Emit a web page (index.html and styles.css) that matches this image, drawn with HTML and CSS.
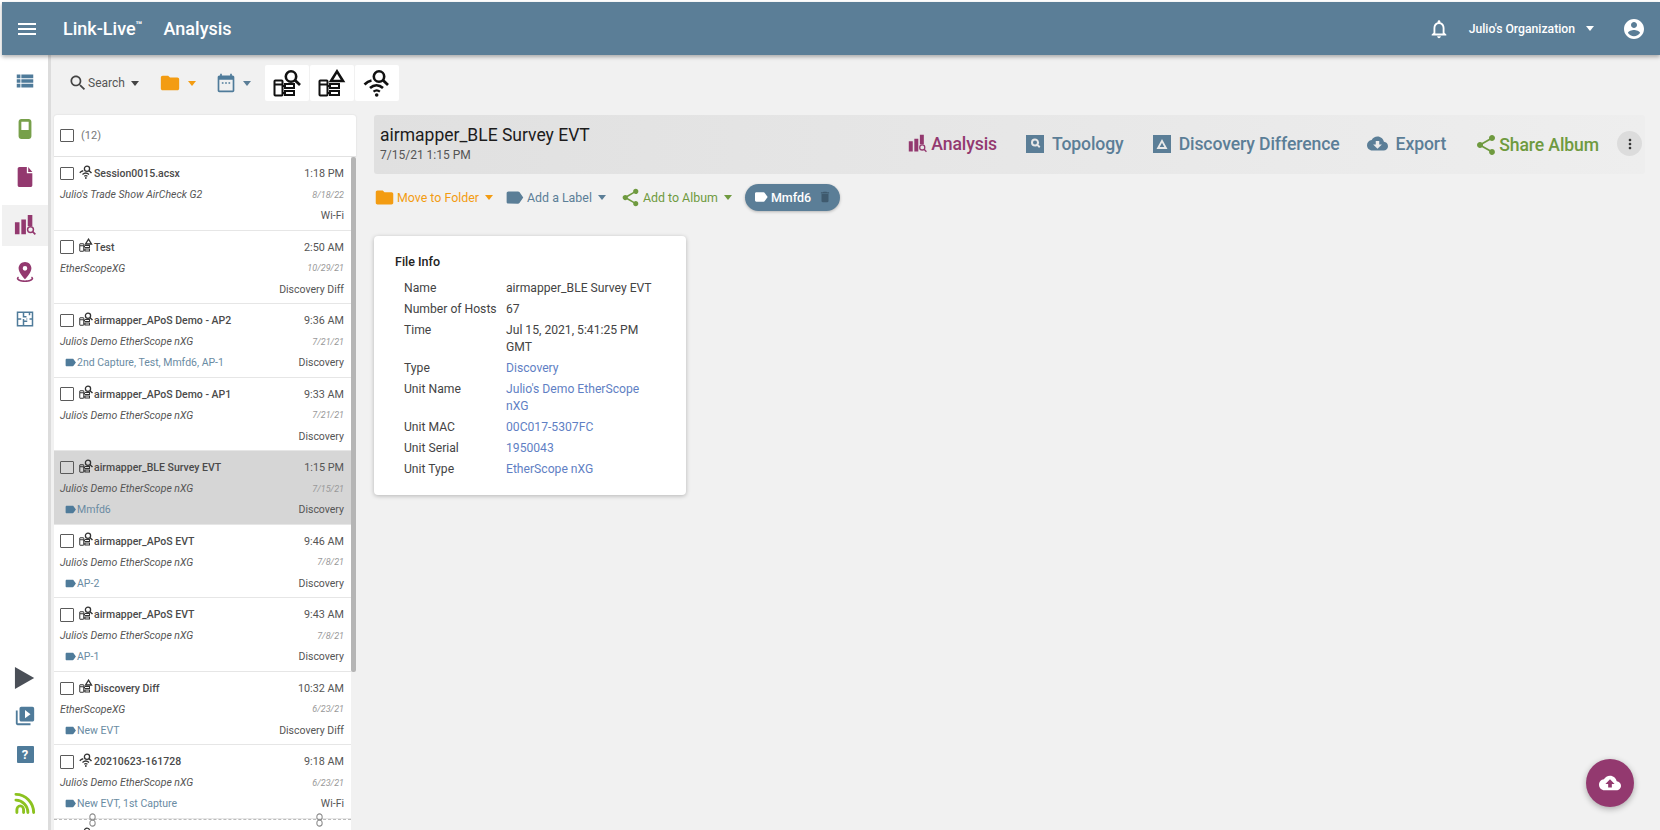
FILE: index.html
```html
<!DOCTYPE html>
<html lang="en">
<head>
<meta charset="utf-8">
<title>Link-Live Analysis</title>
<link rel="stylesheet" href="styles.css">
</head>
<body>
<svg class="defs" width="0" height="0" aria-hidden="true">
  <defs>
    <symbol id="i-search" viewBox="0 0 24 24"><path d="M15.5 14h-.79l-.28-.27C15.41 12.59 16 11.11 16 9.5 16 5.91 13.09 3 9.5 3S3 5.91 3 9.5 5.91 16 9.5 16c1.61 0 3.09-.59 4.23-1.57l.27.28v.79l5 4.99L20.49 19l-4.99-5zm-6 0C7.01 14 5 11.99 5 9.5S7.01 5 9.5 5 14 7.01 14 9.5 11.99 14 9.5 14z"/></symbol>
    <symbol id="i-folder" viewBox="0 0 24 24"><path d="M10 4H4c-1.1 0-1.99.9-1.99 2L2 18c0 1.1.9 2 2 2h16c1.1 0 2-.9 2-2V8c0-1.1-.9-2-2-2h-8l-2-2z"/></symbol>
    <symbol id="i-label" viewBox="0 0 24 24"><path d="M17.63 5.84C17.27 5.33 16.67 5 16 5L5 5.01C3.9 5.01 3 5.9 3 7v10c0 1.1.9 1.99 2 1.99L16 19c.67 0 1.27-.33 1.63-.84L22 12l-4.37-6.16z"/></symbol>
    <symbol id="i-share" viewBox="0 0 24 24"><path d="M18 16.08c-.76 0-1.44.3-1.96.77L8.91 12.7c.05-.23.09-.46.09-.7s-.04-.47-.09-.7l7.05-4.11c.54.5 1.25.81 2.04.81 1.66 0 3-1.34 3-3s-1.34-3-3-3-3 1.34-3 3c0 .24.04.47.09.7L8.04 9.81C7.5 9.31 6.79 9 6 9c-1.66 0-3 1.34-3 3s1.34 3 3 3c.79 0 1.5-.31 2.04-.81l7.12 4.16c-.05.21-.08.43-.08.65 0 1.61 1.31 2.92 2.92 2.92 1.61 0 2.92-1.31 2.92-2.92s-1.31-2.92-2.92-2.92z"/></symbol>
    <symbol id="i-chart" viewBox="0 0 24 24"><path d="M1 9h5v13H1zM8 6h5v16H8zM15 1h5v12h-5z"/><circle cx="18" cy="17" r="3.2" fill="none" stroke="currentColor" stroke-width="1.6"/><path d="M20.3 19.3l3 3" stroke="currentColor" stroke-width="1.8"/></symbol>
    <symbol id="g-search" viewBox="0 0 28 28"><g fill="none" stroke="currentColor" stroke-width="2"><rect x="1.5" y="11.5" width="8" height="15" rx=".8"/><path d="M2 15.5h7"/><rect x="12" y="15" width="9" height="4"/><rect x="12" y="22" width="9" height="4"/><path d="M9.5 17h2.5M9.5 24h2.5"/></g><circle cx="18" cy="7.5" r="5.2" fill="none" stroke="currentColor" stroke-width="2.6"/><path d="M22 11.3l5 4.7" stroke="currentColor" stroke-width="2.8" fill="none"/></symbol>
    <symbol id="g-delta" viewBox="0 0 28 28"><g fill="none" stroke="currentColor" stroke-width="2"><rect x="1.5" y="11.5" width="8" height="15" rx=".8"/><path d="M2 15.5h7"/><rect x="12" y="15" width="9" height="4"/><rect x="12" y="22" width="9" height="4"/><path d="M9.5 17h2.5M9.5 24h2.5"/></g><path d="M19 2.4l6 9.6H13z" fill="none" stroke="currentColor" stroke-width="2.6"/></symbol>
    <symbol id="g-wifi" viewBox="0 0 28 28"><circle cx="16" cy="7.5" r="5.2" fill="none" stroke="currentColor" stroke-width="2.6"/><path d="M20 11.3l5 4.7" stroke="currentColor" stroke-width="2.8" fill="none"/><path d="M1.5 15.5C4 13 6 12 8.5 11.5" stroke="currentColor" stroke-width="2.6" fill="none"/><path d="M7 19c4-3.6 9-3.6 13 0" stroke="currentColor" stroke-width="2.6" fill="none"/><path d="M10.500 22.600c2-1.600 4.400-1.600 6.400 0" stroke="currentColor" stroke-width="2.200" fill="none"/><circle cx="13.700" cy="26" r="1.800" fill="currentColor"/></symbol>
    <symbol id="i-link" viewBox="0 0 8 16"><rect x="1" y="1" width="6" height="7" rx="3" fill="none" stroke="#8a8a8a" stroke-width="1.200"/><rect x="1" y="8" width="6" height="7" rx="3" fill="none" stroke="#8a8a8a" stroke-width="1.200"/></symbol>
  </defs>
</svg>

<div class="app">
  <header class="topbar">
    <svg class="ico menu" viewBox="0 0 24 24"><path d="M3 18h18v-2H3v2zm0-5h18v-2H3v2zm0-7v2h18V6H3z"/></svg>
    <span class="brand">Link-Live<sup>™</sup></span>
    <span class="page-title">Analysis</span>
    <span class="spring"></span>
    <svg class="ico bell" viewBox="0 0 24 24"><path d="M12 22c1.100 0 2-.9 2-2h-4c0 1.100.9 2 2 2zm6-6v-5c0-3.070-1.630-5.640-4.500-6.320V4c0-.83-.67-1.500-1.500-1.500s-1.500.67-1.500 1.500v.68C7.640 5.360 6 7.920 6 11v5l-2 2v1h16v-1l-2-2zm-2 1H8v-6c0-2.480 1.510-4.500 4-4.500s4 2.020 4 4.500v6z"/></svg>
    <span class="org">Julio's Organization</span>
    <span class="caret caret-white org-caret"></span>
    <svg class="ico account" viewBox="0 0 24 24"><path d="M12 2C6.480 2 2 6.480 2 12s4.480 10 10 10 10-4.480 10-10S17.520 2 12 2zm0 3c1.660 0 3 1.340 3 3s-1.340 3-3 3-3-1.340-3-3 1.340-3 3-3zm0 14.200c-2.500 0-4.710-1.280-6-3.220.03-1.990 4-3.080 6-3.080 1.990 0 5.970 1.090 6 3.080-1.290 1.940-3.500 3.220-6 3.220z"/></svg>
  </header>

  <div class="body">
    <nav class="sidebar">
      <a class="nav-item"><svg class="nav-ico steel" viewBox="0 0 24 24"><path d="M3 5h4v4H3zM8 5h13v4H8zM3 10h4v4H3zM8 10h13v4H8zM3 15h4v4H3zM8 15h13v4H8z"/></svg></a>
      <a class="nav-item"><svg class="nav-ico green" viewBox="0 0 24 24"><path d="M8 1h8c1.700 0 3 1.300 3 3v16c0 1.700-1.300 3-3 3H8c-1.700 0-3-1.300-3-3V4c0-1.700 1.300-3 3-3zm0 3v9h8V4z" fill-rule="evenodd"/></svg></a>
      <a class="nav-item"><svg class="nav-ico plum" viewBox="0 0 24 24"><path d="M6 1C4.900 1 4 1.900 4 3v18c0 1.100.9 2 2 2h12c1.100 0 2-.9 2-2V8h-6V1zM15.500 1v5.500H20z"/></svg></a>
      <a class="nav-item active"><svg class="nav-ico plum" viewBox="0 0 24 24"><use href="#i-chart"/></svg></a>
      <a class="nav-item"><svg class="nav-ico nav-place plum" viewBox="0 0 24 24"><path d="M12 1C8.100 1 5 4.100 5 8c0 5 7 12 7 12s7-7 7-12c0-3.900-3.100-7-7-7zm0 9.500A2.500 2.500 0 1 1 12 5.500a2.500 2.500 0 0 1 0 5z" fill-rule="evenodd"/><path d="M4.500 17c-1 .7-1.500 1.400-1.500 2.200C3 21.300 7 23 12 23s9-1.700 9-3.800c0-.8-.5-1.500-1.500-2.200l-1 1.500c.5.300.7.500.7.700 0 .7-2.900 2-7.200 2s-7.200-1.300-7.200-2c0-.2.2-.4.700-.7z"/></svg></a>
      <a class="nav-item"><svg class="nav-plan" viewBox="0 0 24 24"><path d="M2 3h20v18H2zM2 12h5M10 3v6h4M10 12v9M10 15h5M18 3v4M18 12h4M14 12h1" fill="none" stroke="currentColor" stroke-width="2"/></svg></a>
      <span class="spring"></span>
      <a class="nav-low"><svg class="nav-play" viewBox="0 0 24 24"><path d="M1 0l21 12L1 24z"/></svg></a>
      <a class="nav-low"><svg class="nav-ico steel" viewBox="0 0 24 24"><path d="M4 6H2v14c0 1.100.9 2 2 2h14v-2H4V6zm16-4H8c-1.100 0-2 .9-2 2v12c0 1.100.9 2 2 2h12c1.100 0 2-.9 2-2V4c0-1.100-.9-2-2-2zm-8 12.500v-9l6 4.500-6 4.500z"/></svg></a>
      <a class="nav-low"><span class="help">?</span></a>
      <a class="nav-rss"><svg class="nav-rssico" viewBox="0 0 24 24"><path d="M2 3.500c10 0 18.500 8.500 18.500 19M2 9.500c6.500 0 12.500 6 12.500 13M3 22.500v-3c0-2 1.500-4 3.500-4s3.500 2 3.500 4v3" fill="none" stroke="currentColor" stroke-width="3" stroke-linecap="round"/></svg></a>
    </nav>

    <main class="main">
      <div class="toolbar">
        <span class="tool"><svg class="ico16 dark" viewBox="0 0 24 24"><use href="#i-search"/></svg><span class="tool-text">Search</span><span class="caret caret-dark"></span></span>
        <span class="tool tool-folder"><svg class="ico20 orange" viewBox="0 0 24 24"><use href="#i-folder"/></svg><span class="caret caret-orange"></span></span>
        <span class="tool tool-cal"><svg class="ico18 steel" viewBox="0 0 24 24"><path d="M20 3h-1V1h-2v2H7V1H5v2H4c-1.100 0-2 .9-2 2v16c0 1.100.9 2 2 2h16c1.100 0 2-.9 2-2V5c0-1.100-.9-2-2-2zm0 18H4V8h16v13zM7 11h2v2H7zM11 11h2v2h-2zM15 11h2v2h-2z"/></svg><span class="caret caret-steel"></span></span>
        <span class="glyph-group">
          <span class="glyph-btn"><svg class="glyph"><use href="#g-search"/></svg></span>
          <span class="glyph-btn"><svg class="glyph"><use href="#g-delta"/></svg></span>
          <span class="glyph-btn"><svg class="glyph"><use href="#g-wifi"/></svg></span>
        </span>
      </div>

      <div class="workspace">
        <section class="list">
          <div class="list-head"><span class="check"></span><span class="count">(12)</span></div>
          <div class="list-body">
            <div class="rows">
              <article class="row">
                <div class="line"><span class="check"></span><svg class="mini"><use href="#g-wifi"/></svg><span class="name">Session0015.acsx</span><span class="time">1:18 PM</span></div>
                <div class="line"><span class="unit">Julio's Trade Show AirCheck G2</span><span class="date">8/18/22</span></div>
                <div class="line"><span class="tags"></span><span class="kind">Wi-Fi</span></div>
              </article>
              <article class="row">
                <div class="line"><span class="check"></span><svg class="mini"><use href="#g-delta"/></svg><span class="name">Test</span><span class="time">2:50 AM</span></div>
                <div class="line"><span class="unit">EtherScopeXG</span><span class="date">10/29/21</span></div>
                <div class="line"><span class="tags"></span><span class="kind">Discovery Diff</span></div>
              </article>
              <article class="row">
                <div class="line"><span class="check"></span><svg class="mini"><use href="#g-search"/></svg><span class="name">airmapper_APoS Demo - AP2</span><span class="time">9:36 AM</span></div>
                <div class="line"><span class="unit">Julio's Demo EtherScope nXG</span><span class="date">7/21/21</span></div>
                <div class="line"><span class="tags"><svg class="tag-ico" viewBox="0 0 24 24"><use href="#i-label"/></svg>2nd Capture, Test, Mmfd6, AP-1</span><span class="kind">Discovery</span></div>
              </article>
              <article class="row">
                <div class="line"><span class="check"></span><svg class="mini"><use href="#g-search"/></svg><span class="name">airmapper_APoS Demo - AP1</span><span class="time">9:33 AM</span></div>
                <div class="line"><span class="unit">Julio's Demo EtherScope nXG</span><span class="date">7/21/21</span></div>
                <div class="line"><span class="tags"></span><span class="kind">Discovery</span></div>
              </article>
              <article class="row selected">
                <div class="line"><span class="check"></span><svg class="mini"><use href="#g-search"/></svg><span class="name">airmapper_BLE Survey EVT</span><span class="time">1:15 PM</span></div>
                <div class="line"><span class="unit">Julio's Demo EtherScope nXG</span><span class="date">7/15/21</span></div>
                <div class="line"><span class="tags"><svg class="tag-ico" viewBox="0 0 24 24"><use href="#i-label"/></svg>Mmfd6</span><span class="kind">Discovery</span></div>
              </article>
              <article class="row">
                <div class="line"><span class="check"></span><svg class="mini"><use href="#g-search"/></svg><span class="name">airmapper_APoS EVT</span><span class="time">9:46 AM</span></div>
                <div class="line"><span class="unit">Julio's Demo EtherScope nXG</span><span class="date">7/8/21</span></div>
                <div class="line"><span class="tags"><svg class="tag-ico" viewBox="0 0 24 24"><use href="#i-label"/></svg>AP-2</span><span class="kind">Discovery</span></div>
              </article>
              <article class="row">
                <div class="line"><span class="check"></span><svg class="mini"><use href="#g-search"/></svg><span class="name">airmapper_APoS EVT</span><span class="time">9:43 AM</span></div>
                <div class="line"><span class="unit">Julio's Demo EtherScope nXG</span><span class="date">7/8/21</span></div>
                <div class="line"><span class="tags"><svg class="tag-ico" viewBox="0 0 24 24"><use href="#i-label"/></svg>AP-1</span><span class="kind">Discovery</span></div>
              </article>
              <article class="row">
                <div class="line"><span class="check"></span><svg class="mini"><use href="#g-delta"/></svg><span class="name">Discovery Diff</span><span class="time">10:32 AM</span></div>
                <div class="line"><span class="unit">EtherScopeXG</span><span class="date">6/23/21</span></div>
                <div class="line"><span class="tags"><svg class="tag-ico" viewBox="0 0 24 24"><use href="#i-label"/></svg>New EVT</span><span class="kind">Discovery Diff</span></div>
              </article>
              <article class="row">
                <div class="line"><span class="check"></span><svg class="mini"><use href="#g-wifi"/></svg><span class="name">20210623-161728</span><span class="time">9:18 AM</span></div>
                <div class="line"><span class="unit">Julio's Demo EtherScope nXG</span><span class="date">6/23/21</span></div>
                <div class="line"><span class="tags"><svg class="tag-ico" viewBox="0 0 24 24"><use href="#i-label"/></svg>New EVT, 1st Capture</span><span class="kind">Wi-Fi</span></div>
              </article>
              <article class="row row-break">
                <svg class="link link-a"><use href="#i-link"/></svg>
                <svg class="link link-b"><use href="#i-link"/></svg>
                <div class="line"><span class="check check-hidden"></span><svg class="mini"><use href="#g-wifi"/></svg><span class="name"></span></div>
              </article>
            </div>
            <div class="scroll"><span class="thumb"></span></div>
          </div>
        </section>

        <section class="detail">
          <div class="detail-head">
            <div class="detail-title">
              <h1>airmapper_BLE Survey EVT</h1>
              <p>7/15/21 1:15 PM</p>
            </div>
            <span class="spring"></span>
            <a class="act act-plum"><svg class="act-ico act-chart" viewBox="0 0 24 24"><use href="#i-chart"/></svg>Analysis</a>
            <a class="act act-steel"><svg class="act-ico" viewBox="0 0 24 24"><path d="M3 3h18v18H3zm9 3.500a4 4 0 1 0 0 8 4 4 0 0 0 2.100-.6l2 2 1.300-1.300-2-2a4 4 0 0 0-3.400-6.100zm0 2a2 2 0 1 1 0 4 2 2 0 0 1 0-4z" fill-rule="evenodd"/></svg>Topology</a>
            <a class="act act-steel"><svg class="act-ico" viewBox="0 0 24 24"><path d="M3 3h18v18H3zm9 4L6.500 17h11zm0 3.800l2.300 4.200H9.700z" fill-rule="evenodd"/></svg>Discovery Difference</a>
            <a class="act act-steel act-export"><svg class="act-ico act-cloud" viewBox="0 0 24 24"><path d="M19.350 10.040C18.670 6.590 15.640 4 12 4 9.110 4 6.600 5.640 5.350 8.040 2.340 8.360 0 10.910 0 14c0 3.310 2.690 6 6 6h13c2.760 0 5-2.240 5-5 0-2.640-2.050-4.780-4.650-4.960zM17 13l-5 5-5-5h3V9h4v4h3z"/></svg>Export</a>
            <a class="act act-green"><svg class="act-ico act-share" viewBox="0 0 24 24"><use href="#i-share"/></svg>Share Album</a>
            <span class="more"><svg class="ico14" viewBox="0 0 24 24"><path d="M12 8c1.100 0 2-.9 2-2s-.9-2-2-2-2 .9-2 2 .9 2 2 2zm0 2c-1.100 0-2 .9-2 2s.9 2 2 2 2-.9 2-2-.9-2-2-2zm0 6c-1.100 0-2 .9-2 2s.9 2 2 2 2-.9 2-2-.9-2-2-2z"/></svg></span>
          </div>

          <div class="actions">
            <a class="pick pick-orange"><svg class="pick-ico" viewBox="0 0 24 24"><use href="#i-folder"/></svg>Move to Folder<span class="caret caret-orange"></span></a>
            <a class="pick pick-steel"><svg class="pick-ico" viewBox="0 0 24 24"><use href="#i-label"/></svg>Add a Label<span class="caret caret-steel"></span></a>
            <a class="pick pick-green"><svg class="pick-ico" viewBox="0 0 24 24"><use href="#i-share"/></svg>Add to Album<span class="caret caret-green"></span></a>
            <span class="chip"><svg class="chip-ico" viewBox="0 0 24 24"><use href="#i-label"/></svg>Mmfd6<svg class="chip-del" viewBox="0 0 24 24"><path d="M6 19c0 1.100.9 2 2 2h8c1.100 0 2-.9 2-2V7H6v12zM19 4h-3.500l-1-1h-5l-1 1H5v2h14V4z"/></svg></span>
          </div>

          <div class="card">
            <h2>File Info</h2>
            <dl class="info">
              <dt>Name</dt><dd>airmapper_BLE Survey EVT</dd>
              <dt>Number of Hosts</dt><dd>67</dd>
              <dt>Time</dt><dd>Jul 15, 2021, 5:41:25 PM GMT</dd>
              <dt>Type</dt><dd class="blue">Discovery</dd>
              <dt>Unit Name</dt><dd class="blue">Julio's Demo EtherScope nXG</dd>
              <dt>Unit MAC</dt><dd class="blue">00C017-5307FC</dd>
              <dt>Unit Serial</dt><dd class="blue">1950043</dd>
              <dt>Unit Type</dt><dd class="blue">EtherScope nXG</dd>
            </dl>
          </div>
        </section>
      </div>
    </main>
  </div>
</div>

<button class="fab" type="button" aria-label="Upload"><svg viewBox="0 0 24 24"><path d="M19.350 10.040C18.670 6.590 15.640 4 12 4 9.110 4 6.600 5.640 5.350 8.040 2.340 8.360 0 10.910 0 14c0 3.310 2.690 6 6 6h13c2.760 0 5-2.240 5-5 0-2.640-2.050-4.780-4.650-4.960zM14 13v4h-4v-4H7l5-5 5 5h-3z"/></svg></button>
</body>
</html>
```
FILE: styles.css
```css
* { box-sizing: border-box; }
html, body { margin: 0; height: 100%; overflow: hidden; }
body {
  background: #fff;
  font-family: Roboto, "Liberation Sans", sans-serif;
  color: #555;
  font-size: 11px;
}
.defs { position: absolute; }
.spring { flex: 1; }
.app { display: flex; flex-direction: column; height: 100vh; padding: 2px 0 0 2px; }

.topbar {
  flex: 0 0 53px;
  display: flex;
  align-items: center;
  background: #5b7e97;
  color: #fff;
  padding: 0 14px 0 13px;
  box-shadow: 0 2px 4px rgba(0,0,0,.3);
  position: relative;
  z-index: 2;
}
.ico { fill: currentColor; }
.menu { width: 24px; height: 24px; }
.brand { font-size: 18px; font-weight: 500; margin-left: 24px; }
.brand sup { font-size: 11px; font-weight: 700; line-height: 0; vertical-align: 6px; }
.page-title { font-size: 18px; font-weight: 500; margin-left: 21px; }
.bell { width: 22px; height: 22px; }
.org { font-size: 12.2px; font-weight: 500; margin-left: 19px; }
.org-caret { margin-left: 11px; }
.account { width: 24px; height: 24px; margin-left: 28px; }

.caret { display: inline-block; width: 0; height: 0; border: 4.5px solid transparent; border-bottom: 0; border-top-width: 5px; }
.caret-white { border-top-color: #fff; }
.caret-dark { border-top-color: #444; }
.caret-orange { border-top-color: #f39c12; }
.caret-steel { border-top-color: #5b7e97; }
.caret-green { border-top-color: #6f9a3f; }

.body { flex: 1; display: flex; min-height: 0; }
.sidebar {
  flex: 0 0 49px;
  display: flex;
  flex-direction: column;
  padding: 2px 0 9px;
  background: #fff;
  border-right: 3px solid #dcdcdc;
}
.nav-item { flex: 0 0 48px; display: flex; align-items: center; justify-content: center; }
.nav-item.active { background: linear-gradient(#f1f1f1, #f1f1f1) no-repeat center / 100% 41px; }
.nav-low { flex: 0 0 38.5px; display: flex; align-items: center; justify-content: center; }
.nav-rss { flex: 0 0 38px; margin-top: 9px; display: flex; align-items: center; justify-content: center; }
.nav-ico { width: 22px; height: 22px; fill: currentColor; }
.nav-place { margin-top: -2px; }
.nav-plan { width: 18px; height: 18px; color: #4f7b9a; margin-top: -4px; }
.nav-play { width: 22px; height: 22px; fill: #4a4f57; }
.nav-rssico { width: 23px; height: 23px; color: #8cc21f; }
.steel { color: #4f7b9a; fill: currentColor; }
.green { color: #77a04a; }
.plum { color: #93396f; }
.orange { color: #f39c12; fill: currentColor; }
.dark { color: #444; fill: currentColor; }
.help { width: 17px; height: 17px; background: #4f7b9a; color: #fff; font-size: 13px; font-weight: 700; display: flex; align-items: center; justify-content: center; border-radius: 1px; }

.main { flex: 1; min-width: 0; background: #f1f1f1; display: flex; flex-direction: column; padding-left: 3px; }
.toolbar { flex: 0 0 60px; display: flex; align-items: center; padding: 0 0 4px 14px; }
.tool { display: flex; align-items: center; }
.tool-text { font-size: 12px; margin: 0 6px 0 0; color: #555; }
.tool-folder { margin-left: 20.5px; gap: 7px; }
.tool-cal { margin-left: 20px; gap: 7px; }
.ico16 { width: 20px; height: 20px; }
.ico18 { width: 20px; height: 20px; }
.ico20 { width: 22px; height: 22px; }
.ico14 { width: 16px; height: 16px; fill: #333; }
.glyph-group { display: flex; gap: 1px; margin-left: 14px; }
.glyph-btn { width: 44px; height: 36px; background: #fff; display: flex; align-items: center; justify-content: center; border-radius: 2px; }
.glyph { width: 28px; height: 28px; color: #111; }

.workspace { flex: 1; display: flex; min-height: 0; }
.list { flex: 0 0 302px; display: flex; flex-direction: column; min-height: 0; }
.list-head { flex: 0 0 42px; background: #fff; display: flex; align-items: center; padding-left: 6px; border-bottom: 1px solid #e2e2e2; border-radius: 3px 3px 0 0; box-shadow: 0 0 2px rgba(0,0,0,.12); }
.count { font-size: 11px; color: #777; margin-left: 7.5px; }
.check { flex: none; display: inline-block; width: 13.5px; height: 13.5px; border: 1.5px solid #5a5a5a; border-radius: 1px; }
.check-hidden { visibility: hidden; }
.list-body { flex: 1; display: flex; min-height: 0; overflow: hidden; }
.rows { flex: 1; min-width: 0; }
.row { height: 73.55px; background: #fff; border-bottom: 1px solid #e6e6e6; padding: 6px 7px 0 6px; position: relative; }
.row.selected { background: #d6d6d6; }
.row-break { border-top: 1px dashed #bbb; }
.link { position: absolute; width: 7px; height: 16px; top: -8px; }
.link-a { left: 35px; }
.link-b { left: 262px; }
.line { height: 21px; display: flex; align-items: center; justify-content: space-between; }
.mini { flex: none; width: 14px; height: 14px; margin: -4px 1.5px 0 5px; color: #333; }
.name { flex: 1; font-size: 10.5px; font-weight: 500; color: #4a4a4a; white-space: nowrap; }
.time { font-size: 10.8px; color: #555; }
.unit { font-size: 10.5px; font-style: italic; color: #555; }
.date { font-size: 9px; font-style: italic; color: #999; }
.tags { display: flex; align-items: center; color: #6a8ba3; font-size: 10.5px; padding-left: 4px; }
.tag-ico { width: 13px; height: 13px; fill: #4f7b9a; }
.kind { font-size: 10.5px; color: #555; }
.scroll { flex: 0 0 5px; background: #f1f1f1; position: relative; }
.thumb { display: block; width: 5px; height: 515px; background: #b5b5b5; border-radius: 2px; }

.detail { flex: 1; min-width: 0; padding: 0 15px 0 18px; }
.detail-head {
  height: 59px;
  display: flex;
  align-items: center;
  background: linear-gradient(90deg, #e0e0e0, #eeeeee);
  border-radius: 3px;
  padding: 0 3px 2px 6px;
}
.detail-title h1 { margin: 0; font-size: 17.5px; font-weight: 400; color: #1c1c1c; }
.detail-title p { margin: 3px 0 0; font-size: 12px; color: #555; }
.act { display: flex; align-items: center; font-size: 17.6px; font-weight: 500; margin-left: 26px; letter-spacing: -.1px; }
.act-ico { width: 24px; height: 24px; fill: currentColor; margin-right: 5px; }
.act-chart { width: 19px; height: 19px; margin-right: 4px; }
.act-cloud { width: 21px; height: 21px; margin-right: 8px; }
.act-share { margin-right: 1px; }
.act-plum { color: #93396f; }
.act-steel { color: #5b7e97; }
.act-export { margin-left: 27px; }
.act-green { color: #6f9a3f; margin-top: 2px; margin-left: 28px; }
.more { width: 25px; height: 25px; border-radius: 50%; background: #dcdcdc; display: flex; align-items: center; justify-content: center; margin-left: 18px; }

.actions { display: flex; align-items: center; height: 46px; }
.pick { display: flex; align-items: center; font-size: 12.4px; margin-right: 11px; }
.pick .caret { margin-left: 6px; }
.pick-ico { width: 21px; height: 21px; fill: currentColor; margin-right: 2px; }
.pick-orange { color: #f39c12; }
.pick-steel { color: #5b7e97; margin-right: 14px; }
.pick-green { color: #6f9a3f; }
.chip { display: flex; align-items: center; height: 27px; padding: 0 8px 0 8px; background: #5b7e97; color: #fff; border-radius: 14px; font-size: 12.5px; font-weight: 500; box-shadow: 0 1px 3px rgba(0,0,0,.25); margin-left: 2px; }
.chip-ico { width: 16px; height: 16px; fill: #fff; margin-right: 2px; }
.chip-del { width: 14px; height: 14px; fill: #3f5a6e; margin-left: 7px; }

.card { width: 312px; height: 259px; margin-top: 16px; background: #fff; border-radius: 4px; box-shadow: 0 1px 4px rgba(0,0,0,.25); padding: 18px 20px 0 21px; }
.card h2 { margin: 0 0 10px; font-size: 12.5px; font-weight: 500; color: #222; line-height: 16px; }
.info { margin: 0; display: grid; grid-template-columns: 102px 150px; row-gap: 4px; padding-left: 9px; font-size: 12.15px; line-height: 17px; color: #444; }
.info dt, .info dd { margin: 0; }
.blue { color: #5f7fc4; }

.fab { position: fixed; left: 1586px; top: 759px; width: 48px; height: 48px; border: 0; padding: 0; border-radius: 50%; background: #93396f; box-shadow: 0 2px 6px rgba(0,0,0,.3); display: flex; align-items: center; justify-content: center; }
.fab svg { width: 22px; height: 22px; fill: #fff; }
```
